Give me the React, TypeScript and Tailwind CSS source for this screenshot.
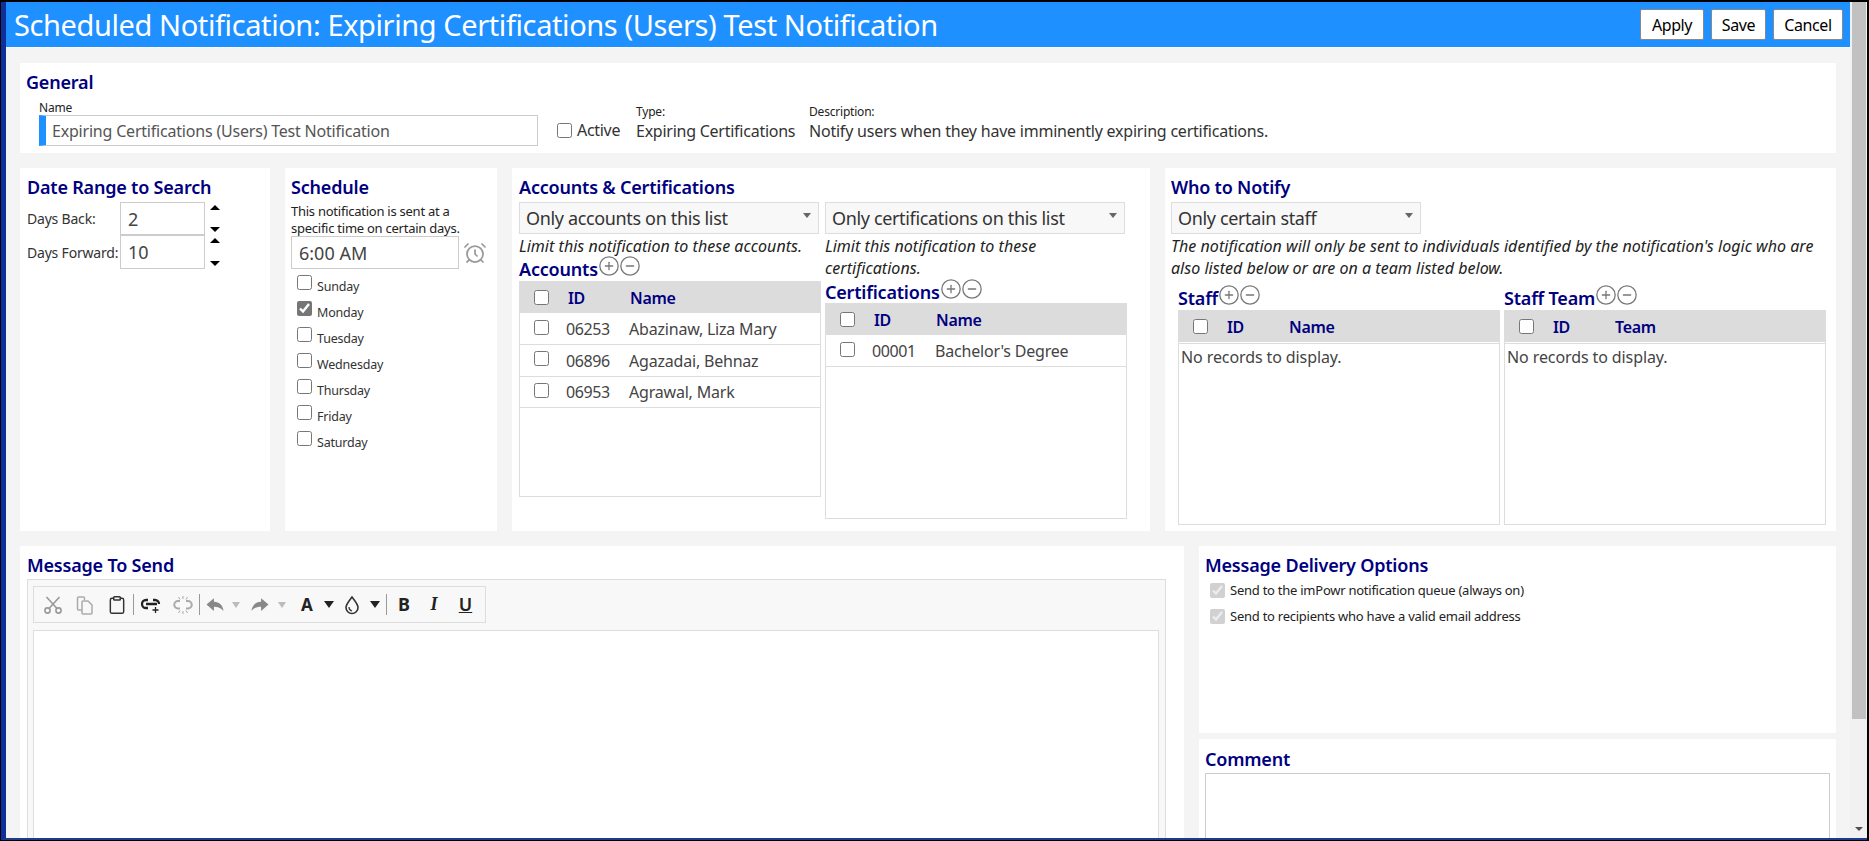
import React from "react";
import { AlarmClock, CirclePlus, CircleMinus, Clipboard } from "lucide-react";

type GridRow = { id: string; name: string };

const Heading = ({ children, className = "" }: { children: React.ReactNode; className?: string }) => (
  <div className={`text-[18px] leading-[22px] font-semibold text-[#000080] tracking-[-0.2px] ${className}`}>{children}</div>
);

const SubHeading = ({ title, className = "" }: { title: string; className?: string }) => (
  <div className={`flex items-start ${className}`}>
    <Heading>{title}</Heading>
    <CirclePlus size={22} strokeWidth={1.4} className="text-[#777] -mt-[3px] shrink-0" />
    <CircleMinus size={22} strokeWidth={1.4} className="text-[#777] -mt-[3px] -ml-[1px] shrink-0" />
  </div>
);

const FakeSelect = ({ label, className }: { label: string; className: string }) => (
  <div className={`flex items-center justify-between h-[32px] bg-[#f8f8f8] border border-[#ddd] pl-[6px] pr-[7px] text-[18px] text-[#333] tracking-[-0.35px] ${className}`}>
    <span>{label}</span>
    <span className="w-0 h-0 -mt-[6px] border-x-[4px] border-x-transparent border-t-[5px] border-t-[#666]" />
  </div>
);

const Italic = ({ children }: { children: React.ReactNode }) => (
  <div className="mt-[1px] text-[16px] leading-[22px] italic text-[#222] tracking-[0.03px] whitespace-nowrap">{children}</div>
);

const Grid = ({ rows, lastCol, className }: { rows: GridRow[]; lastCol: string; className: string }) => (
  <div className={`border border-[#ddd] bg-white ${className}`}>
    <div className="flex items-center h-[31px] bg-[#dcdcdc] text-[16px] font-semibold text-[#000080] tracking-[-0.3px]">
      <input type="checkbox" readOnly className="w-[15px] h-[15px] ml-[14px]" />
      <span className="ml-[19px] w-[62px]">ID</span>
      <span>{lastCol}</span>
    </div>
    {rows.length === 0 ? (
      <>
        <div className="h-[2px] border-b border-[#ddd]" />
        <div className="px-[2px] pt-[2px] text-[16px] leading-[22px] text-[#444] tracking-[-0.1px]">No records to display.</div>
      </>
    ) : (
      rows.map((r, i) => (
        <div key={r.id} className={`flex items-center border-b border-[#ddd] text-[16px] text-[#444] tracking-[-0.2px] ${i === 0 ? "h-[32px]" : "h-[31.5px]"}`}>
          <input type="checkbox" readOnly className="w-[15px] h-[15px] ml-[14px] -mt-[3px]" />
          <span className="ml-[17px] w-[63px] mt-[1px] tracking-[-0.4px]">{r.id}</span>
          <span className="mt-[1px]">{r.name}</span>
        </div>
      ))
    )}
  </div>
);

const DownTri = ({ dark = false }: { dark?: boolean }) =>
  dark ? (
    <span className="block w-0 h-0 border-x-[5px] border-x-transparent border-t-[7px] border-t-[#222]" />
  ) : (
    <span className="block w-0 h-0 border-x-[4px] border-x-transparent border-t-[6px] border-t-[#bbb]" />
  );

const Spinner = () => (
  <div className="flex flex-col justify-between h-full py-[3px] ml-[5px]">
    <span className="block w-0 h-0 border-x-[5px] border-x-transparent border-b-[5px] border-b-black" />
    <span className="block w-0 h-0 border-x-[5px] border-x-transparent border-t-[5px] border-t-black" />
  </div>
);

const Cell = ({ className, children }: { className: string; children: React.ReactNode }) => (
  <div className={`flex items-center justify-center h-full shrink-0 ${className}`}>{children}</div>
);

const Sep = () => <div className="w-[1px] h-[21px] bg-[#999] shrink-0" />;

const days = ["Sunday", "Monday", "Tuesday", "Wednesday", "Thursday", "Friday", "Saturday"];

export default function App() {
  return (
    <div className="h-screen w-full overflow-hidden bg-black border-t-2 border-r-2 border-b border-l border-black font-['Noto_Sans',sans-serif] text-[#333]">
      <div className="h-full flex border-l-[5px] border-l-[#0f2f9b] border-b-2 border-b-[#1e3a8a]">
        <div className="flex-1 min-w-0 flex flex-col bg-[#f4f4f4]">
          {/* Title bar */}
          <div className="flex items-center justify-between h-[45px] shrink-0 bg-[#1e90ff] pl-[8px] pr-[7px]">
            <div className="text-[29px] text-white tracking-[-0.4px] whitespace-nowrap">
              Scheduled Notification: Expiring Certifications (Users) Test Notification
            </div>
            <div className="flex gap-[7px]">
              <button className="w-[64px] h-[31px] bg-white border border-[#888] rounded-[2px] text-[16px] text-black tracking-[-0.4px]">Apply</button>
              <button className="w-[55px] h-[31px] bg-white border border-[#888] rounded-[2px] text-[16px] text-black tracking-[-0.4px]">Save</button>
              <button className="w-[70px] h-[31px] bg-white border border-[#888] rounded-[2px] text-[16px] text-black tracking-[-0.4px]">Cancel</button>
            </div>
          </div>
          <div className="h-[1px] bg-white shrink-0" />

          <div className="flex-1 min-h-0 overflow-hidden pl-[14px] pr-[14px] pt-[15px] flex flex-col gap-[15px]">
            {/* General */}
            <div className="h-[90px] shrink-0 bg-white pt-[8px] pl-[6px]">
              <Heading>General</Heading>
              <div className="flex items-start pl-[13px]">
                <div className="w-[499px] mt-[7px]">
                  <div className="text-[12px] leading-[15px] text-[#222] tracking-[-0.2px]">Name</div>
                  <div className="flex h-[31px] border border-[#ccc] border-l-[7px] border-l-[#1e90ff] items-center pl-[6px] text-[16px] text-[#555] tracking-[-0.2px]">
                    Expiring Certifications (Users) Test Notification
                  </div>
                </div>
                <div className="w-[79px] ml-[19px] mt-[26px] flex items-center gap-[5px] text-[16px] leading-[22px] tracking-[-0.3px] text-[#333]">
                  <input type="checkbox" readOnly className="w-[15px] h-[15px]" />
                  <span>Active</span>
                </div>
                <div className="w-[173px] mt-[11px]">
                  <div className="text-[12px] leading-[16px] text-[#222] tracking-[-0.2px]">Type:</div>
                  <div className="text-[16px] leading-[22px] tracking-[-0.25px] whitespace-nowrap">Expiring Certifications</div>
                </div>
                <div className="mt-[11px]">
                  <div className="text-[12px] leading-[16px] text-[#222] tracking-[-0.2px]">Description:</div>
                  <div className="text-[16px] leading-[22px] tracking-[-0.22px] whitespace-nowrap">Notify users when they have imminently expiring certifications.</div>
                </div>
              </div>
            </div>

            <div className="flex gap-[15px] h-[363px] shrink-0">
              {/* Date range */}
              <div className="w-[250px] shrink-0 bg-white pt-[8px] pl-[7px]">
                <Heading className="pb-[1px]">Date Range to Search</Heading>
                <div className="mt-[3px] flex items-center h-[33px]">
                  <span className="w-[93px] text-[14px] tracking-[-0.2px]">Days Back:</span>
                  <input readOnly value="2" className="w-[85px] h-full border border-[#ccc] px-[7px] text-[18px] text-[#444]" />
                  <Spinner />
                </div>
                <div className="flex items-center h-[34px]">
                  <span className="w-[93px] text-[14px] tracking-[-0.2px] whitespace-nowrap">Days Forward:</span>
                  <input readOnly value="10" className="w-[85px] h-full border border-[#ccc] px-[7px] text-[18px] text-[#444]" />
                  <Spinner />
                </div>
              </div>

              {/* Schedule */}
              <div className="w-[212px] shrink-0 bg-white pt-[8px] pl-[6px]">
                <Heading className="pb-[1px]">Schedule</Heading>
                <div className="mt-[4px] text-[13px] leading-[16.5px] tracking-[-0.25px] text-[#222] whitespace-nowrap">
                  This notification is sent at a
                  <br />
                  specific time on certain days.
                </div>
                <div className="flex items-center">
                  <input readOnly value="6:00 AM" className="w-[168px] h-[33px] border border-[#ccc] px-[7px] text-[18px] text-[#444]" />
                  <AlarmClock size={24} strokeWidth={1.75} className="ml-[4px] text-[#999]" />
                </div>
                <div className="mt-[6px]">
                  {days.map((d) => (
                    <div key={d} className="flex items-start h-[26px]">
                      <input type="checkbox" readOnly checked={d === "Monday"} className="w-[15px] h-[15px] ml-[6px] accent-[#767676]" />
                      <span className="ml-[5px] mt-[3px] text-[12.5px] leading-[18px] tracking-[-0.2px] text-[#333]">{d}</span>
                    </div>
                  ))}
                </div>
              </div>

              {/* Accounts & certifications */}
              <div className="w-[638px] shrink-0 bg-white pt-[8px] pl-[7px]">
                <Heading className="pb-[1px]">Accounts &amp; Certifications</Heading>
                <div className="mt-[3px] flex gap-[4px]">
                  <div className="w-[302px]">
                    <FakeSelect label="Only accounts on this list" className="w-[300px]" />
                    <Italic>Limit this notification to these accounts.</Italic>
                    <SubHeading title="Accounts" className="mt-[1px]" />
                    <Grid
                      lastCol="Name"
                      className="h-[216px] mt-[1px]"
                      rows={[
                        { id: "06253", name: "Abazinaw, Liza Mary" },
                        { id: "06896", name: "Agazadai, Behnaz" },
                        { id: "06953", name: "Agrawal, Mark" },
                      ]}
                    />
                  </div>
                  <div className="w-[302px]">
                    <FakeSelect label="Only certifications on this list" className="w-[300px]" />
                    <Italic>
                      Limit this notification to these
                      <br />
                      certifications.
                    </Italic>
                    <SubHeading title="Certifications" className="mt-[2px]" />
                    <Grid lastCol="Name" className="h-[216px]" rows={[{ id: "00001", name: "Bachelor's Degree" }]} />
                  </div>
                </div>
              </div>

              {/* Who to notify */}
              <div className="flex-1 bg-white pt-[8px] pl-[6px]">
                <Heading className="pb-[1px]">Who to Notify</Heading>
                <FakeSelect label="Only certain staff" className="w-[250px] mt-[3px]" />
                <Italic>
                  The notification will only be sent to individuals identified by the notification's logic who are
                  <br />
                  also listed below or are on a team listed below.
                </Italic>
                <div className="flex gap-[4px] ml-[7px] mt-[8px]">
                  <div className="w-[322px]">
                    <SubHeading title="Staff" />
                    <Grid lastCol="Name" rows={[]} className="h-[215px] mt-[1px]" />
                  </div>
                  <div className="w-[322px]">
                    <SubHeading title="Staff Team" />
                    <Grid lastCol="Team" rows={[]} className="h-[215px] mt-[1px]" />
                  </div>
                </div>
              </div>
            </div>

            <div className="flex gap-[15px] h-[400px] shrink-0">
              {/* Message */}
              <div className="w-[1164px] shrink-0 bg-white pt-[8px] pl-[7px]">
                <Heading className="pb-[1px]">Message To Send</Heading>
                <div className="mt-[2px] w-[1139px] h-[320px] bg-[#f8f8f8] border border-[#ddd] pl-[5px] pt-[6px]">
                  <div className="flex items-center w-[453px] h-[37px] border border-[#ddd]">
                    <Cell className="w-[33px] ml-[2px]">
                      <svg width="20" height="20" viewBox="0 0 20 20" fill="none" stroke="#999" strokeWidth="1.6">
                        <circle cx="4.5" cy="15.5" r="2.6" />
                        <circle cx="15.5" cy="15.5" r="2.6" />
                        <path d="M6 13.5 16.5 2M14 13.5 3.5 2" />
                      </svg>
                    </Cell>
                    <Cell className="w-[32px]">
                      <svg width="20" height="20" viewBox="0 0 20 20" fill="none" stroke="#aaa" strokeWidth="1.5">
                        <path d="M7 15H3.5a1 1 0 0 1-1-1V3a1 1 0 0 1 1-1h5a1 1 0 0 1 1 1v2" />
                        <path d="M7 7a1 1 0 0 1 1-1h5l4 4v8a1 1 0 0 1-1 1H8a1 1 0 0 1-1-1z" />
                      </svg>
                    </Cell>
                    <Cell className="w-[32px]">
                      <Clipboard size={20} strokeWidth={1.75} className="text-[#333]" />
                    </Cell>
                    <Sep />
                    <Cell className="w-[33px]">
                      <svg width="22" height="20" viewBox="0 0 22 20" fill="none" stroke="#222" strokeWidth="2.3">
                        <path d="M8 5H6a4 4 0 0 0 0 8h2M13 5h2a4 4 0 0 1 4 4M6 9h11" />
                        <path d="M15.500 12v6M12.500 15h6" strokeWidth="1.3" />
                      </svg>
                    </Cell>
                    <Cell className="w-[32px]">
                      <svg width="22" height="20" viewBox="0 0 22 20" fill="none" stroke="#aaa" strokeWidth="2">
                        <path d="M8 6H6a3.700 3.700 0 0 0 0 7.500h2M14 6h2a3.700 3.700 0 0 1 0 7.500h-2" />
                        <path d="M11 1v3M11 16v3M6.500 2 8 4.500M15.500 2 14 4.500M6.500 18 8 15.500M15.500 18 14 15.500" strokeWidth="1" />
                      </svg>
                    </Cell>
                    <Sep />
                    <Cell className="w-[22px] ml-[4px]">
                      <svg width="20" height="17" viewBox="0 0 18 16" fill="#888">
                        <path d="M8 2 1 8l7 6v-4c4 0 6.500 1 9 4-.5-5-4-8.500-9-8.500z" />
                      </svg>
                    </Cell>
                    <Cell className="w-[20px]">
                      <DownTri />
                    </Cell>
                    <Cell className="w-[28px]">
                      <svg width="20" height="17" viewBox="0 0 18 16" fill="#888">
                        <path d="M10 2l7 6-7 6v-4c-4 0-6.500 1-9 4 .5-5 4-8.500 9-8.500z" />
                      </svg>
                    </Cell>
                    <Cell className="w-[16px]">
                      <DownTri />
                    </Cell>
                    <Cell className="w-[34px] text-[17px] font-bold text-[#222]">A</Cell>
                    <Cell className="w-[10px]">
                      <DownTri dark />
                    </Cell>
                    <Cell className="w-[36px]">
                      <svg width="18" height="20" viewBox="0 0 18 20" fill="none" stroke="#333" strokeWidth="1.6">
                        <path d="M9 2c3 4 6 7 6 10.500a6 6 0 0 1-12 0C3 9 6 6 9 2z" />
                        <path d="M6 12c0 2 1 3.500 3 4" strokeWidth="1.2" />
                      </svg>
                    </Cell>
                    <Cell className="w-[10px]">
                      <DownTri dark />
                    </Cell>
                    <div className="w-[6px] shrink-0" />
                    <Sep />
                    <Cell className="w-[34px] text-[18px] font-bold text-[#222]">B</Cell>
                    <Cell className="w-[26px] text-[18px] italic font-semibold text-[#222] font-['Liberation_Serif',serif]">I</Cell>
                    <Cell className="w-[37px] text-[18px] font-semibold underline text-[#222]">U</Cell>
                  </div>
                  <div className="mt-[7px] w-[1126px] h-[260px] bg-white border border-[#ddd]" />
                </div>
              </div>

              {/* Delivery and comment */}
              <div className="flex-1 flex flex-col gap-[6px]">
                <div className="h-[187px] shrink-0 bg-white pt-[8px] pl-[6px]">
                  <Heading className="pb-[1px]">Message Delivery Options</Heading>
                  <div className="mt-[6px] flex items-center h-[15px] ml-[5px] gap-[5px] text-[13px] text-[#222] tracking-[-0.25px]">
                    <input type="checkbox" checked disabled readOnly className="w-[15px] h-[15px]" />
                    <span>Send to the imPowr notification queue (always on)</span>
                  </div>
                  <div className="mt-[11px] flex items-center h-[15px] ml-[5px] gap-[5px] text-[13px] text-[#222] tracking-[-0.25px]">
                    <input type="checkbox" checked disabled readOnly className="w-[15px] h-[15px]" />
                    <span>Send to recipients who have a valid email address</span>
                  </div>
                </div>
                <div className="flex-1 bg-white pt-[9px] pl-[6px]">
                  <Heading>Comment</Heading>
                  <div className="mt-[3px] w-[625px] h-[150px] bg-white border border-[#ccc]" />
                </div>
              </div>
            </div>
          </div>
        </div>

        {/* Scrollbar */}
        <div className="w-[17px] shrink-0 flex flex-col bg-[#f1f1f1] pl-[2px] pr-[1px]">
          <div className="h-[717px] bg-[#c1c1c1] shrink-0" />
          <div className="flex-1 flex items-end justify-center pb-[7px]">
            <span className="w-0 h-0 border-x-[4px] border-x-transparent border-t-[4px] border-t-[#505050]" />
          </div>
        </div>
      </div>
    </div>
  );
}
